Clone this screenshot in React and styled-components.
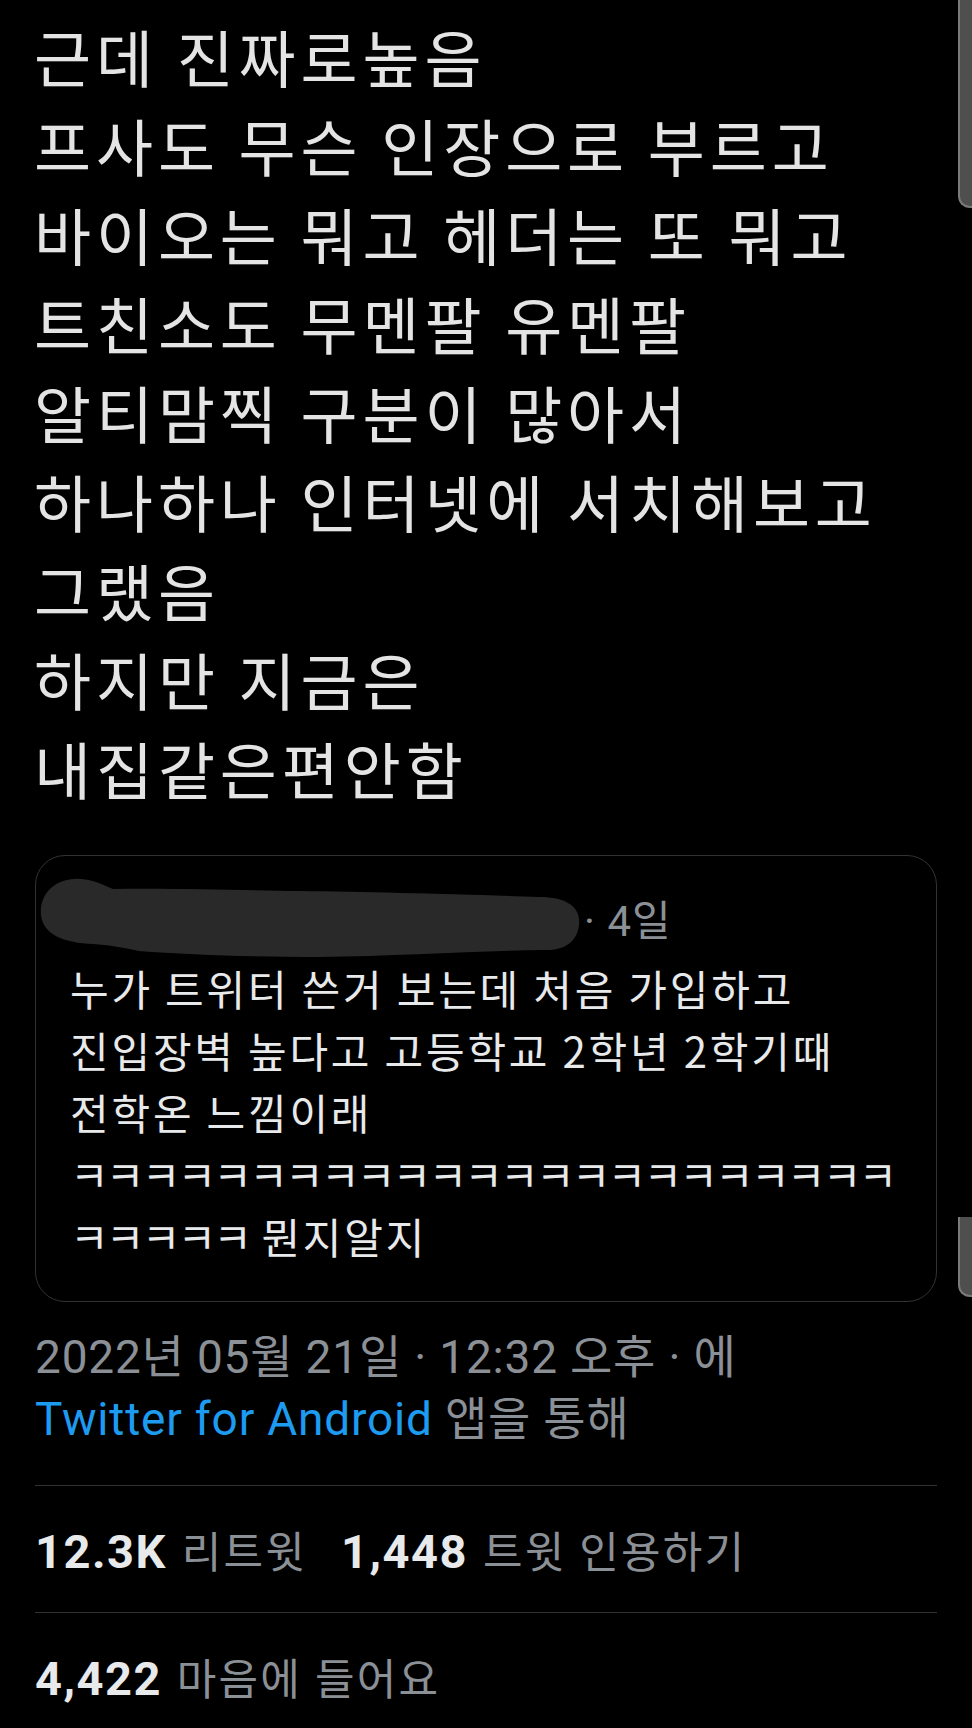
import React from "react";
import styled, { createGlobalStyle } from "styled-components";

const GlobalStyle = createGlobalStyle`
  html, body {
    margin: 0;
    padding: 0;
    background: #000;
  }
  body {
    font-family: "Noto Sans CJK KR", sans-serif;
  }
`;

const Page = styled.div`
  position: relative;
  width: 972px;
  min-height: 1728px;
  box-sizing: border-box;
  padding: 12px 35px 0 35px;
  background: #000;
  overflow: hidden;
`;

const MainText = styled.div`
  font-family: "Noto Sans CJK KR", sans-serif;
  font-size: 62px;
  line-height: 89px;
  letter-spacing: 4.9px;
  color: #e4e4e4;
  margin-left: -1px;
`;

const Line = styled.div`
  white-space: nowrap;
`;

const QuoteCard = styled.div`
  margin-top: 42px;
  border: 1px solid #2f3336;
  border-radius: 30px;
  padding: 21px 34px 34px 34px;
`;

const QuoteHeader = styled.div`
  display: flex;
  align-items: center;
  height: 80px;
  margin-left: -31px;
`;

const Redaction = styled.svg`
  display: block;
  flex-shrink: 0;
  overflow: visible;
`;

const QuoteTime = styled.span`
  font-family: Roboto, "Noto Sans CJK KR", sans-serif;
  font-size: 42px;
  letter-spacing: 1px;
  color: #8b9096;
  margin-left: 5px;
  white-space: nowrap;
`;

const QuoteBody = styled.div`
  font-family: "Noto Sans CJK KR", sans-serif;
  font-size: 42px;
  line-height: 62px;
  letter-spacing: 2.8px;
  color: #e7e9ea;
`;

const Laugh = styled.span`
  letter-spacing: ${(p) => p.$tight}px;
`;

const Meta = styled.div`
  margin-top: 24px;
  font-family: Roboto, "Noto Sans CJK KR", sans-serif;
  font-size: 46px;
  line-height: 62px;
  letter-spacing: 0.8px;
  color: #8b9096;
`;

const Link = styled.span`
  color: #1d9bf0;
`;

const Divider = styled.div`
  border-top: 1px solid #2f3336;
  margin-top: ${(p) => p.$top || 0}px;
`;

const StatRow = styled.div`
  display: flex;
  align-items: center;
  gap: 34px;
  height: 126px;
  font-family: Roboto, "Noto Sans CJK KR", sans-serif;
  font-size: 43px;
  letter-spacing: 2.2px;
`;

const Stat = styled.span`
  white-space: nowrap;
  color: #8b9096;
`;

const Count = styled.b`
  font-size: 47px;
  font-weight: 700;
  letter-spacing: 1.5px;
  color: #e7e9ea;
  margin-right: 2px;
`;

const EdgeHandle = styled.div`
  position: absolute;
  right: 0;
  top: ${(p) => p.$top}px;
  width: 14px;
  height: ${(p) => p.$height}px;
  background: #4f4f4f;
  border-left: 2px solid #7a7a7a;
  border-bottom: 2px solid #7a7a7a;
  border-bottom-left-radius: 12px;
  box-sizing: border-box;
`;

const tweetLines = [
  "근데 진짜로높음",
  "프사도 무슨 인장으로 부르고",
  "바이오는 뭐고 헤더는 또 뭐고",
  "트친소도 무멘팔 유멘팔",
  "알티맘찍 구분이 많아서",
  "하나하나 인터넷에 서치해보고",
  "그랬음",
  "하지만 지금은",
  "내집같은편안함",
];

function App() {
  return (
    <>
      <GlobalStyle />
      <Page>
        <MainText>
          {tweetLines.map((t) => (
            <Line key={t}>{t}</Line>
          ))}
        </MainText>

        <QuoteCard>
          <QuoteHeader>
            <Redaction width="540" height="80" viewBox="0 0 540 80">
              <path
                d="M2 38 C0 16 18 0 42 2 C56 3 64 8 74 12 C130 11 200 13 260 14
                   C330 15 420 17 500 20 C528 20 542 30 540 48 C538 66 524 74 504 73
                   C440 74 360 79 280 80 C220 80 150 78 100 74 C80 70 70 68 54 67
                   C26 66 4 58 2 38 Z"
                fill="#292929"
              />
            </Redaction>
            <QuoteTime>· 4일</QuoteTime>
          </QuoteHeader>
          <QuoteBody>
            <Line>누가 트위터 쓴거 보는데 처음 가입하고</Line>
            <Line>진입장벽 높다고 고등학교 2학년 2학기때</Line>
            <Line>전학온 느낌이래</Line>
            <Line>
              <Laugh $tight={-2.8}>ㅋㅋㅋㅋㅋㅋㅋㅋㅋㅋㅋㅋㅋㅋㅋㅋㅋㅋㅋㅋㅋㅋㅋ</Laugh>
            </Line>
            <Line>
              <Laugh $tight={-2.8}>ㅋㅋㅋㅋㅋ</Laugh> 뭔지알지
            </Line>
          </QuoteBody>
        </QuoteCard>

        <Meta>
          <Line>2022년 05월 21일 · 12:32 오후 · 에</Line>
          <Line>
            <Link>Twitter for Android</Link> 앱을 통해
          </Line>
        </Meta>

        <Divider $top={35} />
        <StatRow>
          <Stat>
            <Count>12.3K</Count> 리트윗
          </Stat>
          <Stat>
            <Count>1,448</Count> 트윗 인용하기
          </Stat>
        </StatRow>
        <Divider />
        <StatRow>
          <Stat>
            <Count>4,422</Count> 마음에 들어요
          </Stat>
        </StatRow>

        <EdgeHandle $top={-2} $height={210} />
        <EdgeHandle $top={1217} $height={80} />
      </Page>
    </>
  );
}

export default App;
